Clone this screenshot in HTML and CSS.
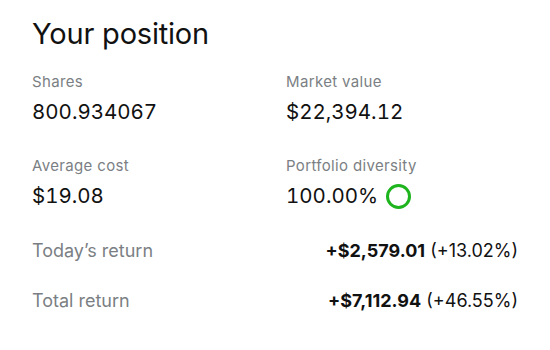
FILE: index.html
```html
<!DOCTYPE html>
<html>
<head>
<meta charset="utf-8">
<link rel="stylesheet" href="styles.css">
</head>
<body>
<div class="position">
  <h1 class="title">Your position</h1>
  <div class="stats">
    <div class="stat">
      <div class="label">Shares</div>
      <div class="value">800.934067</div>
    </div>
    <div class="stat">
      <div class="label">Market value</div>
      <div class="value">$22,394.12</div>
    </div>
    <div class="stat">
      <div class="label">Average cost</div>
      <div class="value">$19.08</div>
    </div>
    <div class="stat">
      <div class="label">Portfolio diversity</div>
      <div class="value">100.00% <span class="ring"></span></div>
    </div>
  </div>
  <div class="returns">
    <div class="row">
      <span class="row-label">Today’s return</span>
      <span class="row-value"><b>+$2,579.01</b> (+13.02%)</span>
    </div>
    <div class="row">
      <span class="row-label">Total return</span>
      <span class="row-value"><b>+$7,112.94</b> (+46.55%)</span>
    </div>
  </div>
</div>
</body>
</html>
```
FILE: styles.css
```css
html, body {
  margin: 0;
  padding: 0;
  background: #fff;
}
body {
  font-family: Inter, "Liberation Sans", sans-serif;
  color: #111;
}
.position {
  padding: 16px 32px 0 32px;
}
.title {
  margin: 0;
  font-size: 29px;
  font-weight: 400;
  line-height: 36px;
  letter-spacing: -0.2px;
}
.stats {
  display: grid;
  grid-template-columns: 1fr 1fr;
  column-gap: 22px;
  row-gap: 31px;
  margin-top: 20px;
}
.label {
  font-size: 15px;
  line-height: 20px;
  letter-spacing: 0.35px;
  color: #7b7f84;
}
.value {
  margin-top: 7px;
  font-size: 20.5px;
  line-height: 26px;
  font-variant-numeric: tabular-nums;
  display: flex;
  align-items: center;
  gap: 8px;
}
.ring {
  width: 19px;
  height: 19px;
  border: 3px solid #1eb41e;
  border-radius: 50%;
  box-sizing: content-box;
}
.returns {
  margin-top: 30px;
  display: flex;
  flex-direction: column;
  gap: 26px;
}
.row {
  display: flex;
  justify-content: space-between;
  align-items: baseline;
  font-size: 18px;
  line-height: 24px;
}
.row-label {
  color: #7b7f84;
}
.row-value {
  color: #111;
}
.row-value b {
  font-weight: 700;
}
```
